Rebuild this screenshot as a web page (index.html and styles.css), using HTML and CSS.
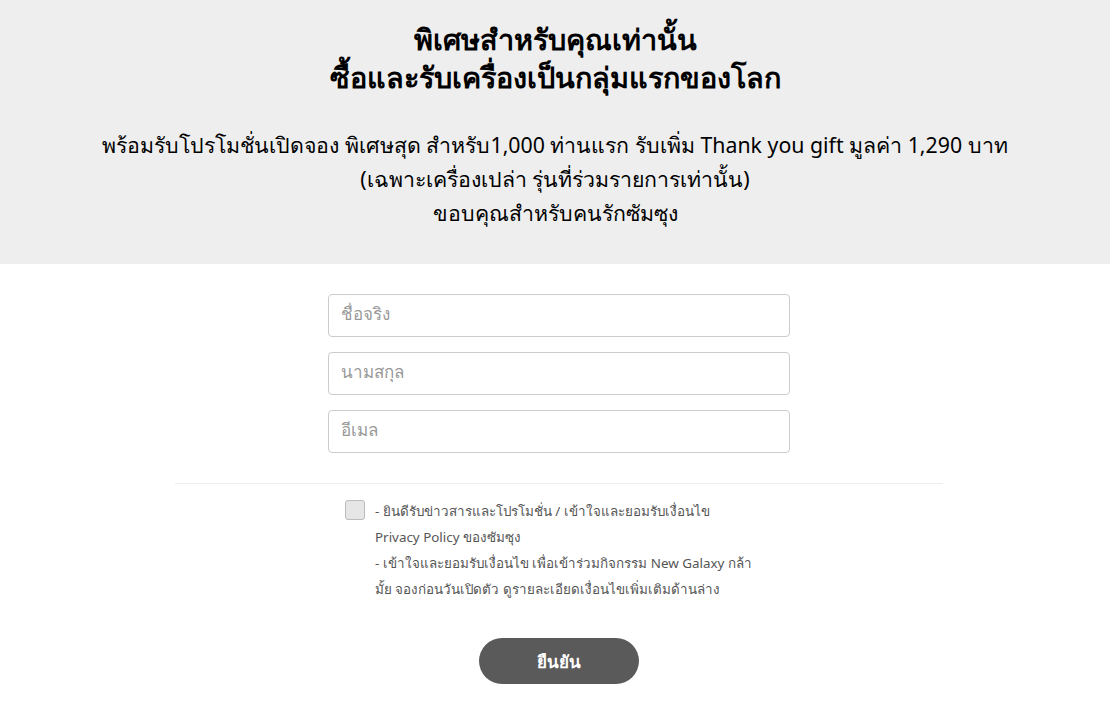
FILE: index.html
```html
<!DOCTYPE html>
<html lang="th">
<head>
    <meta charset="UTF-8">
    <meta name="viewport" content="width=device-width, initial-scale=1.0">
    <title>Register</title>
    <link rel="stylesheet" href="styles.css">
</head>
<body>
    <div class="banner">
        <h1 class="title">พิเศษสำหรับคุณเท่านั้น<br>ซื้อและรับเครื่องเป็นกลุ่มแรกของโลก</h1>
        <p class="sub">พร้อมรับโปรโมชั่นเปิดจอง พิเศษสุด สำหรับ1,000 ท่านแรก รับเพิ่ม Thank you gift มูลค่า 1,290 บาท<br>(เฉพาะเครื่องเปล่า รุ่นที่ร่วมรายการเท่านั้น)<br>ขอบคุณสำหรับคนรักซัมซุง</p>
    </div>
    <form class="form">
        <div class="fields">
            <input class="field" type="text" placeholder="ชื่อจริง">
            <input class="field" type="text" placeholder="นามสกุล">
            <input class="field" type="email" placeholder="อีเมล">
        </div>
        <hr class="divider">
        <label class="agree">
            <input type="checkbox" class="check">
            <span class="agree-text">- ยินดีรับข่าวสารและโปรโมชั่น / เข้าใจและยอมรับเงื่อนไข<br>Privacy Policy ของซัมซุง<br>- เข้าใจและยอมรับเงื่อนไข เพื่อเข้าร่วมกิจกรรม New Galaxy กล้า<br>มั้ย จองก่อนวันเปิดตัว ดูรายละเอียดเงื่อนไขเพิ่มเติมด้านล่าง</span>
        </label>
        <button type="submit" class="submit">ยืนยัน</button>
    </form>
</body>
</html>
```

FILE: styles.css
```css
body {
    margin: 0;
    font-family: "Noto Sans", "DejaVu Sans", sans-serif;
    color: #000;
    background: #fff;
}
.banner {
    background: #eeeeee;
    height: 264px;
    box-sizing: border-box;
    padding-top: 20px;
    text-align: center;
}
.title {
    margin: 0;
    font-size: 28.8px;
    line-height: 38px;
    font-weight: bold;
}
.sub {
    margin: 32px 0 0;
    font-size: 21.3px;
    line-height: 34px;
}
.form {
    display: flex;
    flex-direction: column;
    align-items: center;
    padding: 30px 0 0 8px;
}
.fields {
    display: flex;
    flex-direction: column;
    gap: 15px;
    width: 462px;
}
.field {
    height: 43px;
    box-sizing: border-box;
    border: 1px solid #cccccc;
    border-radius: 4px;
    padding: 0 12px 5px;
    font-family: inherit;
    font-size: 17px;
    color: #333;
}
.field::placeholder {
    color: #999;
}
.divider {
    width: 768px;
    border: none;
    border-top: 1px solid #eeeeee;
    margin: 30px 0 14px;
}
.agree {
    display: flex;
    gap: 10px;
    width: 428px;
    font-size: 13.4px;
    line-height: 26px;
    color: #555;
    white-space: nowrap;
}
.check {
    appearance: none;
    flex: none;
    width: 20px;
    height: 20px;
    margin: 2px 0 0;
    border: 1px solid #bbb;
    border-radius: 3px;
    background: #e6e6e6;
}
.submit {
    margin-top: 36px;
    width: 160px;
    height: 46px;
    border: none;
    border-radius: 23px;
    background: #5a5a5a;
    color: #fff;
    font-family: inherit;
    font-size: 17px;
    font-weight: bold;
}
```
